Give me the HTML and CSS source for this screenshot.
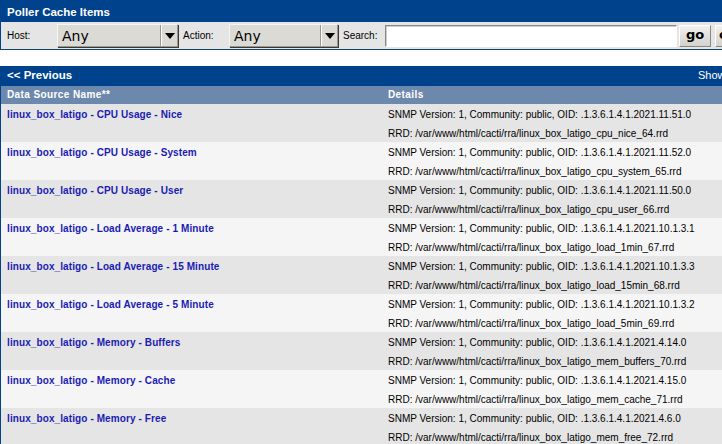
FILE: index.html
```html
<!DOCTYPE html>
<html>
<head>
<meta charset="utf-8">
<link rel="stylesheet" href="styles.css">
</head>
<body>
<div class="page">
  <div class="box filter-box">
    <div class="title-bar">Poller Cache Items</div>
    <div class="filter-row">
      <span class="lbl lbl-host">Host:</span>
      <span class="select sel-host"><span class="sel-val">Any</span><span class="sel-arrow"></span></span>
      <span class="lbl lbl-action">Action:</span>
      <span class="select sel-action"><span class="sel-val">Any</span><span class="sel-arrow"></span></span>
      <span class="lbl lbl-search">Search:</span>
      <span class="input"></span>
      <span class="btn">go</span>
      <span class="btn btn-clear">clear</span>
    </div>
  </div>

  <div class="box list-box">
    <div class="nav-bar">
      <span class="nav-prev">&lt;&lt; Previous</span>
      <span class="nav-show">Showing Rows 1 to 30 of 36</span>
      <span class="nav-next">Next &gt;&gt;</span>
    </div>
    <table class="grid">
      <colgroup><col class="c1"><col class="c2"></colgroup>
      <thead>
        <tr><th>Data Source Name**</th><th>Details</th></tr>
      </thead>
      <tbody>
        <tr class="odd"><td class="name">linux_box_latigo - CPU Usage - Nice</td><td>SNMP Version: 1, Community: public, OID: .1.3.6.1.4.1.2021.11.51.0</td></tr>
        <tr class="odd"><td></td><td>RRD: /var/www/html/cacti/rra/linux_box_latigo_cpu_nice_64.rrd</td></tr>
        <tr class="even"><td class="name">linux_box_latigo - CPU Usage - System</td><td>SNMP Version: 1, Community: public, OID: .1.3.6.1.4.1.2021.11.52.0</td></tr>
        <tr class="even"><td></td><td>RRD: /var/www/html/cacti/rra/linux_box_latigo_cpu_system_65.rrd</td></tr>
        <tr class="odd"><td class="name">linux_box_latigo - CPU Usage - User</td><td>SNMP Version: 1, Community: public, OID: .1.3.6.1.4.1.2021.11.50.0</td></tr>
        <tr class="odd"><td></td><td>RRD: /var/www/html/cacti/rra/linux_box_latigo_cpu_user_66.rrd</td></tr>
        <tr class="even"><td class="name">linux_box_latigo - Load Average - 1 Minute</td><td>SNMP Version: 1, Community: public, OID: .1.3.6.1.4.1.2021.10.1.3.1</td></tr>
        <tr class="even"><td></td><td>RRD: /var/www/html/cacti/rra/linux_box_latigo_load_1min_67.rrd</td></tr>
        <tr class="odd"><td class="name">linux_box_latigo - Load Average - 15 Minute</td><td>SNMP Version: 1, Community: public, OID: .1.3.6.1.4.1.2021.10.1.3.3</td></tr>
        <tr class="odd"><td></td><td>RRD: /var/www/html/cacti/rra/linux_box_latigo_load_15min_68.rrd</td></tr>
        <tr class="even"><td class="name">linux_box_latigo - Load Average - 5 Minute</td><td>SNMP Version: 1, Community: public, OID: .1.3.6.1.4.1.2021.10.1.3.2</td></tr>
        <tr class="even"><td></td><td>RRD: /var/www/html/cacti/rra/linux_box_latigo_load_5min_69.rrd</td></tr>
        <tr class="odd"><td class="name">linux_box_latigo - Memory - Buffers</td><td>SNMP Version: 1, Community: public, OID: .1.3.6.1.4.1.2021.4.14.0</td></tr>
        <tr class="odd"><td></td><td>RRD: /var/www/html/cacti/rra/linux_box_latigo_mem_buffers_70.rrd</td></tr>
        <tr class="even"><td class="name">linux_box_latigo - Memory - Cache</td><td>SNMP Version: 1, Community: public, OID: .1.3.6.1.4.1.2021.4.15.0</td></tr>
        <tr class="even"><td></td><td>RRD: /var/www/html/cacti/rra/linux_box_latigo_mem_cache_71.rrd</td></tr>
        <tr class="odd"><td class="name">linux_box_latigo - Memory - Free</td><td>SNMP Version: 1, Community: public, OID: .1.3.6.1.4.1.2021.4.6.0</td></tr>
        <tr class="odd"><td></td><td>RRD: /var/www/html/cacti/rra/linux_box_latigo_mem_free_72.rrd</td></tr>
        <tr class="even"><td class="name">linux_box_latigo - Memory - Total</td><td>SNMP Version: 1, Community: public, OID: .1.3.6.1.4.1.2021.4.5.0</td></tr>
        <tr class="even"><td></td><td>RRD: /var/www/html/cacti/rra/linux_box_latigo_mem_total_73.rrd</td></tr>
      </tbody>
    </table>
  </div>
</div>
</body>
</html>
```

FILE: styles.css
```css
html, body {
  margin: 0;
  padding: 0;
  overflow: hidden;
  background: #fff;
}
body {
  font-family: "Liberation Sans", Arial, sans-serif;
  font-size: 10px;
  color: #000;
}
.page {
  width: 900px;
}
.box {
  border-left: 1px solid #00438C;
}
.title-bar {
  background: #00438C;
  color: #fff;
  font-weight: bold;
  font-size: 11.5px;
  height: 22px;
  line-height: 24px;
  padding-left: 6px;
}
.filter-row {
  background: #E5E5E5;
  height: 27px;
  border-bottom: 1px solid #14406E;
  display: flex;
  align-items: center;
  padding-left: 6px;
}
.lbl {
  font-size: 10px;
  color: #000;
}
.lbl-host { width: 50px; }
.lbl-action { width: 46px; margin-left: 5px; }
.lbl-search { width: 42px; margin-left: 5px; }
.select {
  display: flex;
  height: 23px;
  box-sizing: border-box;
  background: #DCDAD5;
  border: 1px solid #9A9893;
  border-top-color: #F6F5F3;
  border-left-color: #F6F5F3;
  box-shadow: 1px 1px 0 #3A3935;
}
.sel-host { width: 121px; }
.sel-action { width: 109px; }
.sel-val {
  flex: 1;
  font-family: "DejaVu Sans", sans-serif;
  font-size: 14px;
  line-height: 22px;
  padding-left: 4px;
  color: #000;
}
.sel-arrow {
  width: 16px;
  border-left: 1px solid #9A9893;
  box-shadow: inset 1px 0 0 #fff;
  position: relative;
}
.sel-arrow::after {
  content: "";
  position: absolute;
  left: 4px;
  top: 8px;
  border-left: 5px solid transparent;
  border-right: 5px solid transparent;
  border-top: 6px solid #000;
}
.input {
  width: 292px;
  height: 22px;
  box-sizing: border-box;
  background: #fff;
  border: 1px solid #fff;
  border-top-color: #8A8884;
  border-left-color: #8A8884;
  box-shadow: inset 1px 1px 0 #D0CECA;
}
.btn {
  width: 32px;
  height: 22px;
  box-sizing: border-box;
  margin-left: 2px;
  background: linear-gradient(#F2F1EF, #D4D2CD);
  border: 1px solid #8A8884;
  border-top-color: #fff;
  border-left-color: #fff;
  font-family: "DejaVu Sans", sans-serif;
  font-weight: bold;
  font-size: 13px;
  line-height: 18px;
  text-align: center;
  color: #000;
}
.btn-clear {
  width: 44px;
  margin-left: 4px;
}
.list-box {
  margin-top: 16px;
}
.nav-bar {
  background: #00438C;
  color: #fff;
  height: 20px;
  line-height: 19px;
  font-size: 11.5px;
  display: flex;
  padding-left: 6px;
}
.nav-prev {
  font-weight: bold;
  width: 691px;
}
.nav-show {
  width: 150px;
  font-size: 11px;
}
.nav-next {
  font-weight: bold;
}
.grid {
  border-collapse: collapse;
  width: 100%;
}
.c1 { width: 381px; }
.grid th {
  background: #6D88AD;
  color: #fff;
  font-weight: bold;
  font-size: 10px;
  letter-spacing: 0.4px;
  text-align: left;
  height: 18px;
  padding: 0 0 0 6px;
  line-height: 18px;
}
.grid td {
  height: 17px;
  padding: 2px 0 0 6px;
  line-height: 17px;
  font-size: 10px;
  white-space: nowrap;
}
.grid td.name {
  color: #1B1BB3;
  font-weight: bold;
  letter-spacing: 0.1px;
}
.odd td { background: #E5E5E5; }
.even td { background: #F5F5F5; }
```
